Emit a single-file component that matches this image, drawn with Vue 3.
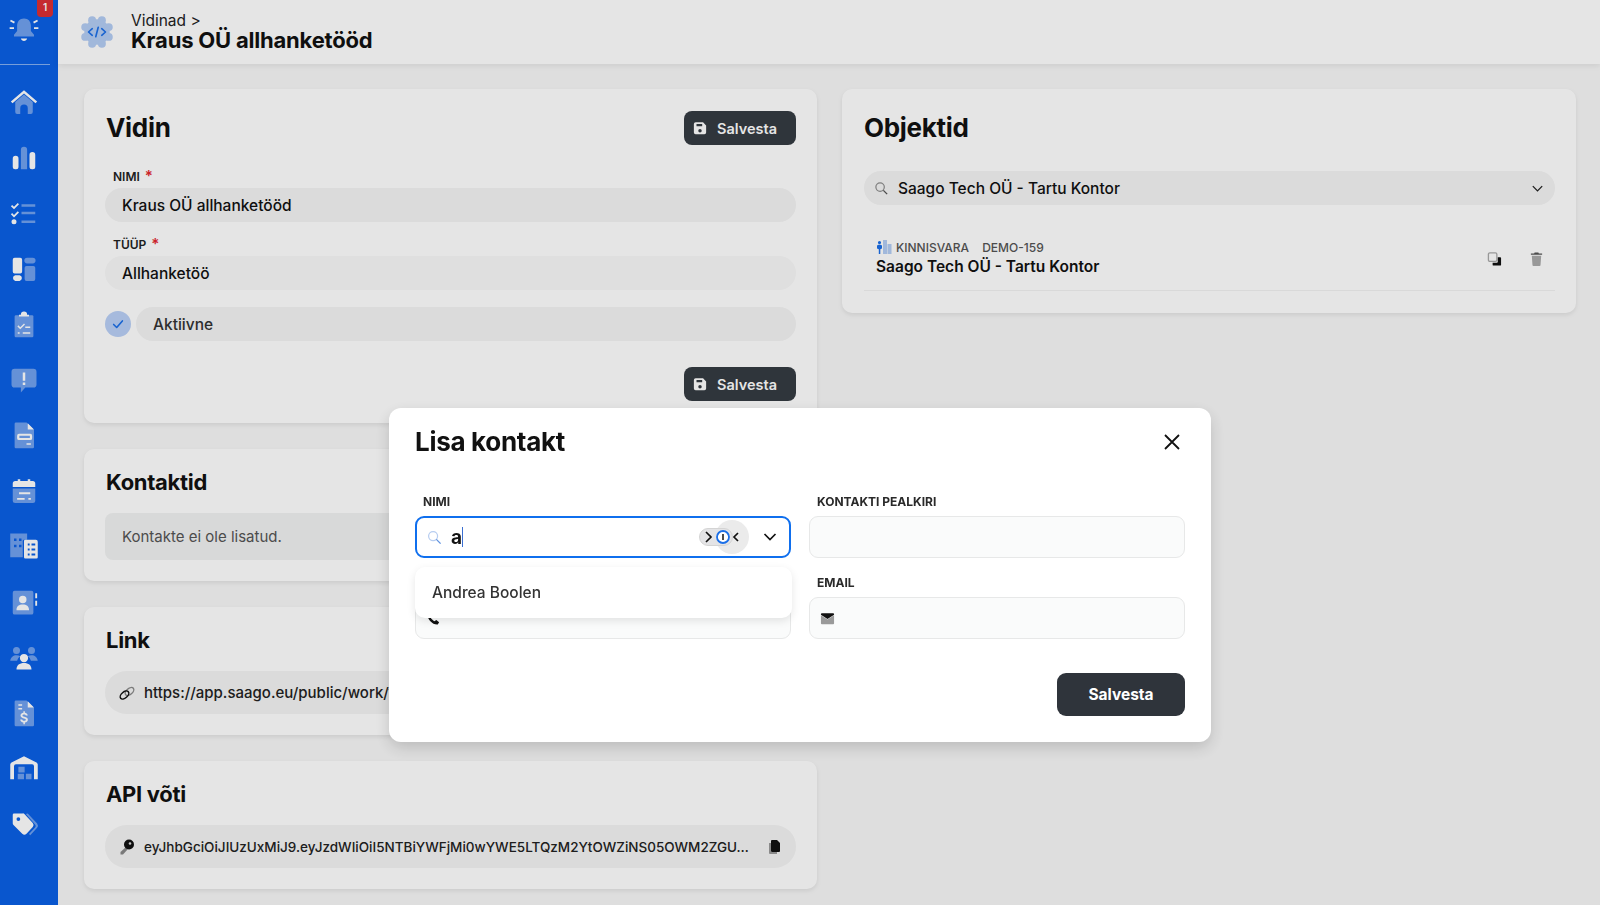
<script setup>
const navItems = [
  { name: 'home', soft: 'M5 12 12 6l7 6v8a1.5 1.5 0 0 1-1.5 1.5H15V17a3 3 0 0 0-6 0v4.500H6.500A1.500 1.500 0 0 1 5 20z', solid: 'M1.500 11.500 12 2.500l10.500 9-1.300 1.500L12 5.200 2.800 13z' },
  { name: 'chart', soft: 'M9.500 5.500a2.500 2.500 0 0 1 5 0V21h-5z', solid: 'M3 12.500a2.300 2.300 0 0 1 4.600 0V19a2 2 0 0 1-2 2H5a2 2 0 0 1-2-2zM16.400 9.500a2.300 2.300 0 0 1 4.600 0V19a2 2 0 0 1-2 2h-.6a2 2 0 0 1-2-2z' },
  { name: 'tasks', soft: 'M10 5h11v2H10zM10 11h11v2H10zM10 18h11v2H10z', solid: 'M2.500 5.500 4 7l3-3 1 1-4 4-2.500-2.500zM2.500 12 4 13.500l3-3 1 1-4 4L1.500 13zM4 17a2 2 0 1 1 0 4 2 2 0 0 1 0-4z' },
  { name: 'board', soft: 'M14.500 3h4.500a2.200 2.200 0 0 1 0 4.500h-4.500a2.200 2.200 0 0 1 0-4.500zM14 9.500h5.500A1.500 1.500 0 0 1 21 11v9a1.500 1.500 0 0 1-1.500 1.500H14a1.500 1.500 0 0 1-1.500-1.500v-9A1.500 1.500 0 0 1 14 9.500z', solid: 'M4.500 3H9a1.500 1.500 0 0 1 1.500 1.500V14A1.500 1.500 0 0 1 9 15.500H4.500A1.500 1.500 0 0 1 3 14V4.500A1.500 1.500 0 0 1 4.500 3zM5 17h3.500a2.300 2.300 0 0 1 0 4.500H5A2.300 2.300 0 0 1 5 17z' },
  { name: 'clip', soft: 'M5.500 5H18.500a1 1 0 0 1 1 1v15.500a1 1 0 0 1-1 1H5.500a1 1 0 0 1-1-1V6a1 1 0 0 1 1-1z', solid: 'M8 6V4.500h1.500a2.500 2.500 0 0 1 5 0H16V6zM7.500 13l1.500 1.500 3-3 .8.8L9 16.200l-2.300-2.300zM13 14h4v1.200h-4zM7 18.500h1.500v1.200H7zM11 18.500h6v1.200h-6z' },
  { name: 'alert', soft: 'M4.500 3h15A2.500 2.500 0 0 1 22 5.500v10a2.500 2.500 0 0 1-2.500 2.500H13l-3.500 4v-4h-5A2.500 2.500 0 0 1 2 15.500v-10A2.500 2.500 0 0 1 4.500 3z', solid: 'M11 6h2v6.500h-2zM11 14h2v2h-2z' },
  { name: 'doc', soft: 'M5.500 2H14l6 6v13.500a1 1 0 0 1-1 1H5.500a1 1 0 0 1-1-1V3a1 1 0 0 1 1-1z', solid: 'M15 2.500 20 7.500h-5zM8 11h9a1.500 1.500 0 0 1 1.500 1.500v2A1.500 1.500 0 0 1 17 16H8a1.500 1.500 0 0 1-1.500-1.500v-2A1.500 1.500 0 0 1 8 11zm.3 1.600v1.800h8.400v-1.800zM14 18.500h3.500v1.300H14z' },
  { name: 'calendar', soft: 'M3 10h18v9.500a2 2 0 0 1-2 2H5a2 2 0 0 1-2-2z', solid: 'M5 4h2V2.500h2V4h6V2.500h2V4h2a2 2 0 0 1 2 2v2.800H3V6a2 2 0 0 1 2-2zM8 13h9v1.500H8zM6.500 17.500h6V19h-6zM15.500 17.500h2V19h-2z' },
  { name: 'building', soft: 'M1 2h13.500v5H12a1 1 0 0 0-1 1v13H1zM4 6v2h2V6zM8 6v2h2V6zM4 11v2h2v-2zM8 11v2h2v-2z', solid: 'M13 7h8.500A1.500 1.500 0 0 1 23 8.500V21a1 1 0 0 1-1 1h-9a1 1 0 0 1-1-1V8a1 1 0 0 1 1-1zm2 3v1.500h1.500V10zm3 0v1.500h3V10zm-3 4v1.500h1.500V14zm3 0v1.500h3V14zm-3 4v1.500h1.500V18zm3 0v1.500h3V18z' },
  { name: 'contact', soft: 'M4.500 3H18a1.500 1.500 0 0 1 1.500 1.500v16A1.500 1.500 0 0 1 18 22H4.500A1.500 1.500 0 0 1 3 20.500v-16A1.500 1.500 0 0 1 4.500 3z', solid: 'M11 7a3 3 0 1 1 0 6 3 3 0 0 1 0-6zM6 18c0-2.500 2-4 5-4s5 1.500 5 4v.5H6zM21 5h1.500v4H21zM21 11h1.500v4H21z' },
  { name: 'users', soft: 'M6 4a2.800 2.800 0 1 1 0 5.600A2.800 2.800 0 0 1 6 4zM18 4a2.800 2.800 0 1 1 0 5.600A2.800 2.800 0 0 1 18 4zM1 15c.3-3 2.500-4.500 5-4.500 1 0 2 .2 3 .8-1.500 1-2 2.200-2.500 3.700zM23 15c-.3-3-2.500-4.500-5-4.500-1 0-2 .2-3 .8 1.500 1 2 2.200 2.500 3.700z', solid: 'M12 9.500a3.300 3.300 0 1 1 0 6.600 3.300 3.300 0 0 1 0-6.600zM6 22c0-3.500 2.500-5.200 6-5.200s6 1.700 6 5.200z' },
  { name: 'invoice', soft: 'M5.500 2H14l6 6v13.500a1 1 0 0 1-1 1H5.500a1 1 0 0 1-1-1V3a1 1 0 0 1 1-1z', solid: 'M15 2.500 20 7.500h-5zM7.500 5h3v1.200h-3zM7.500 8h3v1.200h-3zM11.500 10.500h1.200v1.300c1.300.2 2.200 1 2.300 2.200h-1.600c-.1-.5-.5-.8-1.300-.8s-1.300.3-1.300.8.400.7 1.500 1c1.700.4 2.800 1 2.800 2.400 0 1.200-.9 2-2.400 2.200v1.300h-1.200v-1.300c-1.500-.2-2.400-1-2.500-2.400h1.600c.1.700.6 1 1.500 1s1.400-.3 1.400-.8-.4-.8-1.600-1.100c-1.600-.4-2.700-1-2.700-2.300 0-1.200.9-2 2.300-2.200z' },
  { name: 'warehouse', soft: 'M7.500 11h5v4.500h-5zM7 16.500h5V21H7zM13.500 16.500H18V21h-4.500z', solid: 'M12 2.500 22 7.500a2 2 0 0 1 1 1.700V21h-3V10.500a1.500 1.500 0 0 0-1.500-1.500h-13A1.500 1.500 0 0 0 4 10.500V21H1V9.200a2 2 0 0 1 1-1.700z' },
  { name: 'tag', soft: 'M15 3.500 22.500 11.500a3 3 0 0 1 0 3.500L17 21l-1-1 5-5.500a1.500 1.500 0 0 0 0-2L13.500 4z', solid: 'M4 3.500h7a2 2 0 0 1 1.500.6l6.500 7a2.500 2.500 0 0 1 0 3.200L14 19.800a2.500 2.500 0 0 1-3.400 0l-7-7A2 2 0 0 1 3 11.300V4.500a1 1 0 0 1 1-1zM7.500 6.500a1.500 1.500 0 1 0 0 3 1.500 1.500 0 0 0 0-3z' }
]

// scalloped edge of the header gear
const gearTeeth = Array.from({ length: 8 }, (_, i) => {
  const angle = (i * Math.PI) / 4 + Math.PI / 8
  return { cx: 18 + Math.cos(angle) * 13.5, cy: 18 + Math.sin(angle) * 13.5 }
})

const apiKey = 'eyJhbGciOiJIUzUxMiJ9.eyJzdWIiOiI5NTBiYWFjMi0wYWE5LTQzM2YtOWZiNS05OWM2ZGU…'
</script>

<template>
  <div class="shell">
    <aside class="sidebar">
      <div class="bell-wrap">
        <svg class="nav-icon" viewBox="0 0 24 24">
          <path class="soft" d="M12 3.500c3.600 0 5.500 2.500 5.500 6v4l2.500 3v1.500H4V16.500l2.500-3v-4c0-3.500 1.900-6 5.500-6z" />
          <path class="solid" d="M9.500 19.500h5c-.3 1.300-1.300 2-2.500 2s-2.200-.7-2.500-2zM.5 10.500h3.500V12H.5zM20 10.500h3.500V12H20zM1.500 4.500l3.200 1.700-.7 1.300L.8 5.800zM22.500 4.500l-3.200 1.700.7 1.300 3.200-1.700z" />
        </svg>
        <span class="badge">1</span>
      </div>
      <div class="side-line"></div>
      <nav class="nav">
        <svg v-for="item in navItems" :key="item.name" class="nav-icon" viewBox="0 0 24 24">
          <path class="soft" fill-rule="evenodd" :d="item.soft" />
          <path class="solid" fill-rule="evenodd" :d="item.solid" />
        </svg>
      </nav>
    </aside>

    <div class="content">
      <header class="topbar">
        <svg class="gear" viewBox="0 0 36 36">
          <circle cx="18" cy="18" r="13.500" fill="#b4cdf4" />
          <circle v-for="(t, i) in gearTeeth" :key="i" :cx="t.cx" :cy="t.cy" r="4.200" fill="#b4cdf4" />
          <path fill="none" stroke="#1b6fe8" stroke-width="1.700" stroke-linecap="round" stroke-linejoin="round" d="M13 14.500 9 18l4 3.500M23 14.500 27 18l-4 3.500M19.300 13l-2.600 10" />
        </svg>
        <div>
          <div class="crumb">Vidinad &gt;</div>
          <div class="page-title">Kraus OÜ allhanketööd</div>
        </div>
      </header>

      <main class="columns">
        <div class="col left-col">
          <section class="card widget-card">
            <div class="card-head">
              <h2>Vidin</h2>
              <button class="save-btn">
                <svg viewBox="0 0 16 16" class="save-icon"><path fill="#fff" fill-rule="evenodd" d="M3 1.500h8.500L15 5v8a2 2 0 0 1-2 2H3a2 2 0 0 1-2-2V3.500a2 2 0 0 1 2-2zM4 3.500V6h6.500V3.500zM8 9a2 2 0 1 0 0 4 2 2 0 0 0 0-4z" /></svg>
                Salvesta
              </button>
            </div>
            <label class="field-label">NIMI <span class="req">*</span></label>
            <div class="pill-input">Kraus OÜ allhanketööd</div>
            <label class="field-label second">TÜÜP <span class="req">*</span></label>
            <div class="pill-input pale">Allhanketöö</div>
            <div class="active-row">
              <span class="check">
                <svg viewBox="0 0 16 16"><path fill="none" stroke="#1b6fe8" stroke-width="1.800" stroke-linecap="round" stroke-linejoin="round" d="M3 8.500 6.500 12 13 4.500" /></svg>
              </span>
              <div class="pill-input active-pill">Aktiivne</div>
            </div>
            <div class="card-foot">
              <button class="save-btn">
                <svg viewBox="0 0 16 16" class="save-icon"><path fill="#fff" fill-rule="evenodd" d="M3 1.500h8.500L15 5v8a2 2 0 0 1-2 2H3a2 2 0 0 1-2-2V3.500a2 2 0 0 1 2-2zM4 3.500V6h6.500V3.500zM8 9a2 2 0 1 0 0 4 2 2 0 0 0 0-4z" /></svg>
                Salvesta
              </button>
            </div>
          </section>

          <section class="card contacts-card">
            <h2>Kontaktid</h2>
            <div class="empty-box">Kontakte ei ole lisatud.</div>
          </section>

          <section class="card link-card">
            <h2>Link</h2>
            <div class="value-pill">
              <svg class="value-icon" viewBox="0 0 20 20">
                <ellipse cx="12.500" cy="8.500" rx="5" ry="3" transform="rotate(-40 12.500 8.500)" fill="none" stroke="#8a8a8a" stroke-width="1.400" />
                <ellipse cx="7.500" cy="12" rx="5" ry="3" transform="rotate(-40 7.500 12)" fill="none" stroke="#111" stroke-width="1.500" />
              </svg>
              <span class="value-text">https://app.saago.eu/public/work/form</span>
            </div>
          </section>

          <section class="card api-card">
            <h2>API võti</h2>
            <div class="value-pill">
              <svg class="value-icon" viewBox="0 0 20 20">
                <path fill="#888" d="M9 10 11 12 6 17.500H3.500V15z" />
                <circle cx="12" cy="7.500" r="5" fill="#111" />
                <circle cx="13" cy="6.500" r="1.300" fill="#dcdcdc" />
              </svg>
              <span class="value-text key">{{ apiKey }}</span>
              <svg class="copy-icon" viewBox="0 0 16 16">
                <path fill="#9a9a9a" d="M3 4h2v9h6v2H4a1 1 0 0 1-1-1z" />
                <path fill="#111" d="M6 1h5l3 3v8a1 1 0 0 1-1 1H6a1 1 0 0 1-1-1V2a1 1 0 0 1 1-1z" />
              </svg>
            </div>
          </section>
        </div>

        <div class="col">
          <section class="card objects-card">
            <h2>Objektid</h2>
            <div class="object-select">
              <svg class="small-icon" viewBox="0 0 16 16"><circle cx="6.500" cy="6.500" r="4.500" fill="none" stroke="#8d8d8d" stroke-width="1.300" /><path stroke="#555" stroke-width="1.500" d="m10 10 4 4" /></svg>
              <span class="select-text">Saago Tech OÜ - Tartu Kontor</span>
              <svg class="small-icon" viewBox="0 0 16 16"><path fill="none" stroke="#222" stroke-width="1.400" d="m3 5.500 5 5 5-5" /></svg>
            </div>
            <div class="object-row">
              <div class="object-info">
                <div class="object-meta">
                  <svg class="meta-icon" viewBox="0 0 16 16">
                    <path fill="#b4cdf4" d="M7 1h4v14H7zM11.500 5H15.500v10h-4z" />
                    <path fill="#1b6fe8" d="M3.500 2a1.600 1.600 0 1 1 0 3.200 1.600 1.600 0 0 1 0-3.200zM1 7c0-1 1-1.300 2.500-1.300S6 6 6 7v2c0 .7-.8 1-1.700 1.200V15H2.800v-4.800C1.800 10 1 9.700 1 9z" />
                  </svg>
                  <span>KINNISVARA</span>
                  <span class="code">DEMO-159</span>
                </div>
                <div class="object-name">Saago Tech OÜ - Tartu Kontor</div>
              </div>
              <svg class="row-icon" viewBox="0 0 16 16">
                <rect x="1.500" y="1.500" width="9" height="9" rx="1.500" fill="#fff" stroke="#aaa" stroke-width="1.400" />
                <path fill="#111" d="M11.500 6H14a1 1 0 0 1 1 1v7a1 1 0 0 1-1 1H7a1 1 0 0 1-1-1v-2h4.500a1 1 0 0 0 1-1z" />
              </svg>
              <svg class="row-icon trash" viewBox="0 0 16 16">
                <path fill="#555" d="M6 1h4l.5 1H14v1.500H2V2h3.500z" />
                <path fill="#aaa" d="M3 4.500h10l-.7 10a1 1 0 0 1-1 1H4.700a1 1 0 0 1-1-1z" />
              </svg>
            </div>
          </section>
        </div>
      </main>
    </div>

    <div class="backdrop">
      <div class="modal">
        <div class="modal-head">
          <h2>Lisa kontakt</h2>
          <svg class="close" viewBox="0 0 18 18"><path stroke="#111" stroke-width="1.800" fill="none" d="m2 2 14 14M16 2 2 16" /></svg>
        </div>
        <div class="modal-grid">
          <div class="modal-field">
            <label>NIMI</label>
            <div class="box focus">
              <svg class="small-icon" viewBox="0 0 16 16"><circle cx="6.500" cy="6.500" r="4.800" fill="none" stroke="#b7cdf0" stroke-width="1.300" /><path stroke="#5f92e0" stroke-width="1.400" d="m10 10 4.500 4.500" /></svg>
              <span class="typed">a</span><span class="caret"></span>
              <svg class="pw-icon" viewBox="0 0 52 36">
                <circle cx="33" cy="18" r="17" fill="#ebebeb" />
                <rect x="0.500" y="9.500" width="33" height="17" rx="8.500" fill="#e4e4e6" stroke="#d4d4d4" />
                <path fill="none" stroke="#111" stroke-width="1.700" d="m7 13 5 5-5 5M39 14l-4 4 4 4" />
                <circle cx="24" cy="18" r="6" fill="#fff" stroke="#1b6fe8" stroke-width="1.800" />
                <path stroke="#111" stroke-width="1.500" d="M24 15v6" />
              </svg>
              <svg class="chevron" viewBox="0 0 16 16"><path fill="none" stroke="#111" stroke-width="1.700" d="m2.500 5 5.500 5.500L13.500 5" /></svg>
            </div>
            <div class="menu">Andrea Boolen</div>
          </div>
          <div class="modal-field">
            <label>KONTAKTI PEALKIRI</label>
            <div class="box"></div>
          </div>
          <div class="modal-field">
            <!-- label sits under the open dropdown -->
            <label>&nbsp;</label>
            <div class="box">
              <svg class="small-icon" viewBox="0 0 16 16"><path fill="#111" d="M4 1.500 6.500 5 5 7c.8 1.700 2.200 3 4 4l2-1.500 3 2.500-1.500 2.500C7 15 1.500 9 1.500 3.500z" /></svg>
            </div>
          </div>
          <div class="modal-field">
            <label>EMAIL</label>
            <div class="box">
              <svg class="small-icon" viewBox="0 0 16 16">
                <path fill="#9a9a9a" d="M1 4.500 8 9l7-4.500V13a1 1 0 0 1-1 1H2a1 1 0 0 1-1-1z" />
                <path fill="#111" d="M2 2.500h12a1 1 0 0 1 1 1v.5L8 8.500 1 4v-.5a1 1 0 0 1 1-1z" />
              </svg>
            </div>
          </div>
        </div>
        <div class="modal-foot">
          <button class="modal-save">Salvesta</button>
        </div>
      </div>
    </div>
  </div>
</template>

<style scoped>
.shell {
  display: flex;
  height: 100vh;
  overflow: hidden;
  font-family: Inter, "Open Sans", sans-serif;
  color: #111;
  background: #f8f8f8;
}

.sidebar {
  width: 58px;
  flex-shrink: 0;
  background: #0b60e6;
  box-sizing: border-box;
}

.bell-wrap {
  height: 64px;
  display: flex;
  align-items: center;
  padding-left: 9px;
  padding-bottom: 6px;
  box-sizing: border-box;
  position: relative;
}

.badge {
  position: absolute;
  left: 37px;
  top: 0;
  width: 16px;
  height: 17px;
  background: #dc2f35;
  border-radius: 0 0 4px 4px;
  color: #fff;
  font-size: 10px;
  font-weight: 600;
  text-align: center;
  line-height: 14px;
}

.side-line {
  width: 50px;
  height: 1px;
  background: rgba(255, 255, 255, 0.5);
}

.nav {
  display: flex;
  flex-direction: column;
  align-items: center;
  gap: 25.5px;
  padding: 22px 11px 0 0;
}

.nav-icon {
  width: 30px;
  height: 30px;
  display: block;
  flex-shrink: 0;
}

.soft {
  fill: rgba(255, 255, 255, 0.42);
}

.solid {
  fill: #fff;
}

.content {
  flex: 1;
  min-width: 0;
}

.topbar {
  height: 64px;
  background: #fff;
  display: flex;
  align-items: center;
  gap: 17px;
  padding-left: 22px;
  box-shadow: 0 2px 6px rgba(0, 0, 0, 0.08);
}

.gear {
  width: 34px;
  height: 34px;
}

.crumb {
  font-size: 15.5px;
  line-height: 17px;
  color: #222;
  margin-top: -2px;
}

.page-title {
  font-size: 22px;
  line-height: 22px;
  font-weight: 700;
  letter-spacing: -0.2px;
}

.columns {
  display: grid;
  grid-template-columns: 733px 734px;
  gap: 25px;
  padding: 25px 0 0 26px;
}

.col {
  display: flex;
  flex-direction: column;
  gap: 26px;
}

.card {
  background: #fff;
  border-radius: 10px;
  box-shadow: 0 2px 5px rgba(0, 0, 0, 0.09);
  padding: 19px 21px 0 22px;
  box-sizing: border-box;
}

.left-col .card {
  padding-left: 21px;
}

.left-col h2 {
  margin-left: 1px;
}

h2 {
  margin: 0;
  font-size: 26px;
  line-height: 34px;
  font-weight: 700;
  letter-spacing: -0.3px;
}

.widget-card {
  height: 334px;
  padding-top: 22px;
  display: flex;
  flex-direction: column;
}

.card-head {
  display: flex;
  justify-content: space-between;
  align-items: center;
  height: 34px;
}

.save-btn {
  width: 112px;
  height: 34px;
  border: none;
  border-radius: 8px;
  background: #353b42;
  color: #fff;
  font-family: inherit;
  font-size: 14.5px;
  font-weight: 600;
  display: flex;
  align-items: center;
  gap: 10px;
  padding: 0 0 0 9px;
}

.save-icon {
  width: 14px;
  height: 14px;
}

.field-label {
  display: block;
  margin: 24px 0 3px 8px;
  font-size: 12px;
  line-height: 16px;
  font-weight: 600;
  color: #222;
}

.field-label.second {
  margin-top: 15px;
}

.req {
  color: #e3262e;
  font-size: 15px;
  margin-left: 2px;
  line-height: 12px;
}

.pill-input {
  height: 34px;
  border-radius: 17px;
  background: #f4f4f4;
  padding-left: 17px;
  display: flex;
  align-items: center;
  font-size: 15.5px;
  font-weight: 500;
}

.pill-input.pale {
  background: #f9f9f9;
}

.active-row {
  display: flex;
  align-items: center;
  gap: 5px;
  margin-top: 17px;
}

.check {
  width: 26px;
  height: 26px;
  border-radius: 50%;
  background: #b9d0f6;
  display: flex;
  align-items: center;
  justify-content: center;
  flex-shrink: 0;
}

.check svg {
  width: 14px;
  height: 14px;
}

.active-pill {
  flex: 1;
  color: #333;
}

.card-foot {
  display: flex;
  justify-content: flex-end;
  margin-top: 26px;
}

.contacts-card {
  height: 132px;
}

.contacts-card h2,
.link-card h2,
.api-card h2 {
  font-size: 22px;
  line-height: 28px;
}

.empty-box {
  margin-top: 17px;
  height: 47px;
  background: #f1f2f2;
  border-radius: 8px;
  padding-left: 17px;
  display: flex;
  align-items: center;
  font-size: 15px;
  color: #555;
}

.link-card,
.api-card {
  height: 128px;
}

.value-pill {
  margin-top: 17px;
  height: 43px;
  border-radius: 22px;
  background: #f4f4f4;
  display: flex;
  align-items: center;
  padding: 0 14px 0 12px;
  gap: 7px;
}

.value-icon {
  width: 20px;
  height: 20px;
  flex-shrink: 0;
}

.value-text {
  flex: 1;
  min-width: 0;
  white-space: nowrap;
  font-size: 15px;
  font-weight: 500;
  color: #222;
}

.value-text.key {
  font-size: 13.5px;
}

.copy-icon {
  width: 16px;
  height: 16px;
  flex-shrink: 0;
}

.objects-card {
  height: 224px;
  padding-top: 22px;
}

.object-select {
  margin-top: 26px;
  height: 34px;
  border-radius: 17px;
  background: #f4f4f4;
  display: flex;
  align-items: center;
  padding: 0 10px;
  gap: 9px;
}

.small-icon {
  width: 15px;
  height: 15px;
  flex-shrink: 0;
}

.select-text {
  flex: 1;
  font-size: 15.5px;
  font-weight: 500;
}

.object-row {
  margin-top: 26px;
  height: 60px;
  padding: 8px 11px 0 12px;
  box-sizing: border-box;
  border-bottom: 1px solid #f2f2f2;
  display: flex;
  gap: 27px;
}

.object-info {
  flex: 1;
}

.object-meta {
  display: flex;
  align-items: center;
  font-size: 12px;
  line-height: 15px;
  font-weight: 500;
  color: #555;
  gap: 4px;
}

.code {
  margin-left: 9px;
}

.meta-icon {
  width: 16px;
  height: 16px;
}

.object-name {
  margin-top: 2px;
  font-size: 15.5px;
  font-weight: 600;
}

.row-icon {
  width: 15px;
  height: 16px;
  margin-top: 12px;
}

.backdrop {
  position: fixed;
  inset: 0;
  background: rgba(0, 0, 0, 0.1);
  display: flex;
  justify-content: center;
  align-items: flex-start;
  padding-top: 408px;
  box-sizing: border-box;
}

.modal {
  width: 822px;
  height: 334px;
  box-sizing: border-box;
  background: #fff;
  border-radius: 12px;
  padding: 20px 26px 0;
  box-shadow: 0 6px 16px rgba(0, 0, 0, 0.16);
}

.modal h2 {
  margin-left: 0;
}

.modal-head {
  display: flex;
  justify-content: space-between;
  align-items: center;
  height: 28px;
}

.close {
  width: 18px;
  height: 18px;
  margin-right: 4px;
}

.modal-grid {
  display: grid;
  grid-template-columns: 376px 376px;
  column-gap: 18px;
  row-gap: 17px;
  margin-top: 38px;
}

.modal-field {
  position: relative;
}

.modal-field label {
  display: block;
  margin: 0 0 6px 8px;
  font-size: 12px;
  line-height: 16px;
  font-weight: 700;
  color: #2a2a2a;
}

.box {
  height: 42px;
  box-sizing: border-box;
  border: 1px solid #e7e8e8;
  border-radius: 9px;
  background: #fafbfb;
  display: flex;
  align-items: center;
  padding: 0 10px;
}

.box.focus {
  border: 2px solid #0f6fee;
  background: #fff;
  padding: 0 11px 0 10px;
}

.typed {
  margin-left: 9px;
  font-size: 19px;
  font-weight: 700;
}

.caret {
  width: 1px;
  height: 20px;
  background: #3b6fd1;
}

.pw-icon {
  width: 52px;
  height: 36px;
  margin-left: auto;
}

.chevron {
  width: 16px;
  height: 16px;
  margin-left: 11px;
}

.menu {
  position: absolute;
  left: 0;
  right: -1px;
  top: 73px;
  height: 51px;
  z-index: 2;
  background: #fff;
  border-radius: 10px;
  box-shadow: 0 3px 8px rgba(0, 0, 0, 0.1);
  padding-left: 17px;
  display: flex;
  align-items: center;
  font-size: 15.5px;
  font-weight: 500;
  color: #333;
}

.modal-foot {
  display: flex;
  justify-content: flex-end;
  margin-top: 34px;
}

.modal-save {
  width: 128px;
  height: 43px;
  border: none;
  border-radius: 9px;
  background: #2f343b;
  color: #fff;
  font-family: inherit;
  font-size: 15.5px;
  font-weight: 700;
}
</style>
